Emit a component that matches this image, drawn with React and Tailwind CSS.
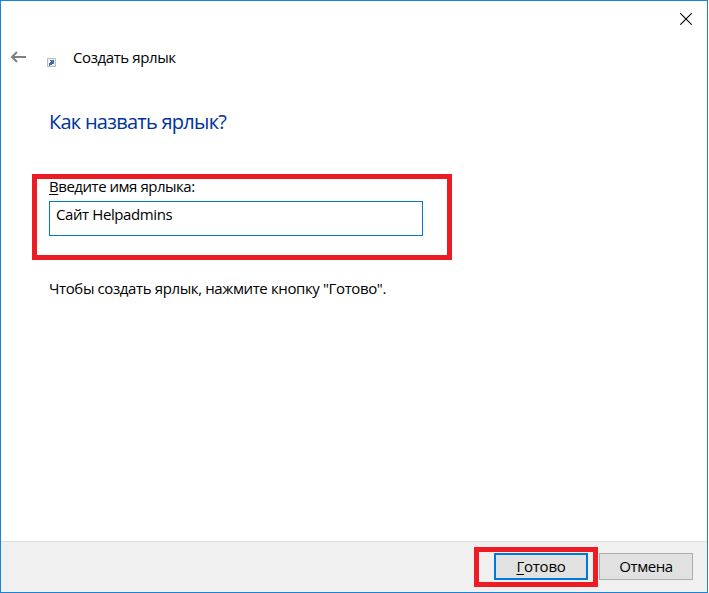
const ShortcutIcon = () => (
  <svg width="9" height="9" viewBox="0 0 9 9" shapeRendering="crispEdges">
    <rect width="9" height="9" fill="#bdbdbd" />
    <rect x="1" y="1" width="7" height="7" fill="#f1f1f1" />
    <path d="M3 2h4v4H5v1H3v1H2V5h1V4h1V3H3z" fill="#3b6cb0" />
  </svg>
);

const App = () => {
  return (
    <div className="w-[709px] h-[593px] bg-white overflow-hidden">
      <div className="w-[708px] h-[593px] flex flex-col border border-[#1883d7] bg-white font-['Open_Sans','Noto_Sans',sans-serif] text-[15px] tracking-[-0.4px] leading-5 text-black whitespace-nowrap">
        {/* close button */}
        <div className="h-[46px] flex justify-end pt-3 pr-[15px]">
          <button className="w-3 h-3" aria-label="Закрыть">
            <svg width="12" height="12" viewBox="0 0 12 12">
              <path d="M0.3 0.3L11.7 11.7M11.7 0.3L0.3 11.7" stroke="#000" strokeWidth="1.1" fill="none" />
            </svg>
          </button>
        </div>

        {/* wizard title */}
        <div className="h-5 flex pl-[9px]">
          <svg className="mt-1" width="17" height="12" viewBox="0 0 17 12">
            <path d="M16 6H2M7 1L2 6l5 5" stroke="#808080" strokeWidth="2" fill="none" />
          </svg>
          <div className="w-[46px] pl-5 pt-[11px]">
            <ShortcutIcon />
          </div>
          <span>Создать ярлык</span>
        </div>

        <h1 className="mt-[41px] ml-12 h-7 text-[20px] tracking-[-0.73px] leading-7 text-[#003399]">Как назвать ярлык?</h1>

        {/* name field */}
        <div className="mt-[38px] ml-[31px] w-[420px] h-[86px] border-[5px] border-[#ed1c24] pl-3">
          <label className="block h-[22px] -mt-[3px] tracking-[-0.47px]">
            <span className="underline underline-offset-2">В</span>ведите имя ярлыка:
          </label>
          <div className="mt-[3px] w-[374px] h-[35px] border border-[#0078d7] pl-[6px] pt-[2px]">Сайт Helpadmins</div>
        </div>

        <p className="mt-[18px] ml-12 tracking-[-0.38px]">Чтобы создать ярлык, нажмите кнопку "Готово".</p>

        {/* footer */}
        <div className="mt-auto h-[51px] flex pl-[473px] pt-[5px] bg-[#f0f0f0] border-t border-[#dfdfdf]">
          <div className="w-[124px] h-10 border-[5px] border-[#ed1c24] pl-[15px] pt-px">
            <button className="block w-[94px] h-[27px] bg-[#e1e1e1] border-2 border-[#0078d7] tracking-[-0.25px] leading-[23px]">
              <span className="underline underline-offset-2">Г</span>отово
            </button>
          </div>
          <button className="ml-px mt-[6px] w-[94px] h-[27px] bg-[#e1e1e1] border border-[#adadad] leading-[25px]">Отмена</button>
        </div>
      </div>
    </div>
  );
};

export default App;
